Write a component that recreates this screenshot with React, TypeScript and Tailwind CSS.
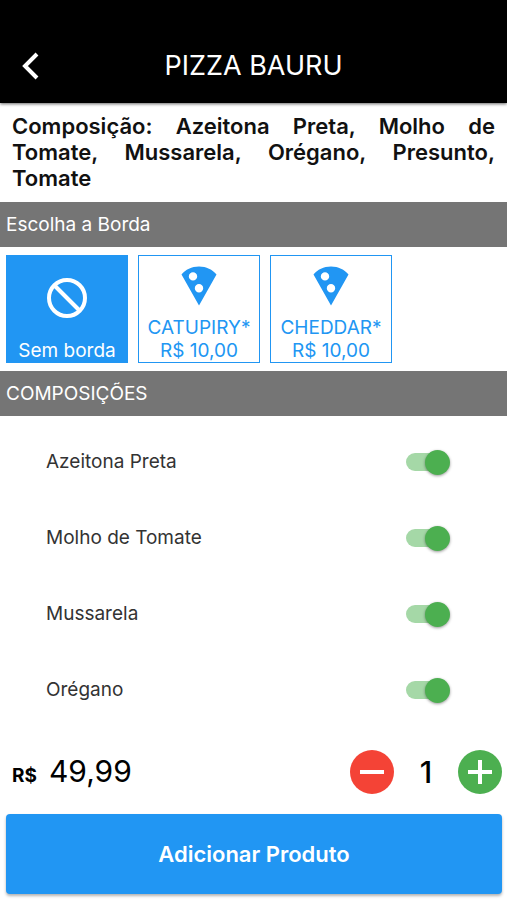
import { useState } from "react";

const ingredients = ["Azeitona Preta", "Molho de Tomate", "Mussarela", "Orégano"];

const crusts = [
  { id: "none", label: "Sem borda", price: "" },
  { id: "catupiry", label: "CATUPIRY*", price: "R$ 10,00" },
  { id: "cheddar", label: "CHEDDAR*", price: "R$ 10,00" },
];

function PizzaIcon() {
  return (
    <svg viewBox="0 0 36 40" className="h-10 w-9" fill="currentColor" aria-hidden="true">
      <path
        fillRule="evenodd"
        d="M18 0.5C10.700 0.500 4.500 3.500 0.500 8.600L18 39.500L35.500 8.600C31.500 3.500 25.300 0.500 18 0.500ZM12 6.200a4.200 4.200 0 1 1 0 8.400a4.200 4.200 0 1 1 0-8.400ZM18 18a4.200 4.200 0 1 1 0 8.400a4.200 4.200 0 1 1 0-8.400Z"
      />
    </svg>
  );
}

function BlockIcon() {
  return (
    <svg viewBox="0 0 40 40" className="size-10" fill="none" stroke="currentColor" strokeWidth="4" aria-hidden="true">
      <circle cx="20" cy="20" r="18" />
      <path d="M7.500 7.500L32.500 32.500" />
    </svg>
  );
}

function SectionTitle({ children }: { children: string }) {
  return (
    <h2 className="flex h-[45px] items-center bg-[#757575] px-1.5 text-[19px] leading-6 text-white">{children}</h2>
  );
}

function IngredientRow({ name }: { name: string }) {
  const [on, setOn] = useState(true);
  return (
    <li>
      <label className="flex h-[76px] cursor-pointer items-center justify-between pr-[57px] pl-[46px] text-[19px] text-[#333333]">
        <span>{name}</span>
        <span className="relative flex h-[25px] w-11 items-center">
          <input
            type="checkbox"
            role="switch"
            checked={on}
            onChange={() => setOn(!on)}
            className="peer absolute inset-0 cursor-pointer opacity-0"
          />
          <span className="pointer-events-none h-[18px] w-10 rounded-full bg-gray-300 peer-checked:bg-[#a5d8a7]" />
          <span className="pointer-events-none absolute left-0 size-[25px] rounded-full bg-gray-100 shadow-[0_1px_3px_rgba(0,0,0,0.4)] peer-checked:left-[19px] peer-checked:bg-[#4caf50]" />
        </span>
      </label>
    </li>
  );
}

export default function App() {
  const [crust, setCrust] = useState("none");
  const [quantity, setQuantity] = useState(1);

  return (
    <div className="flex min-h-screen flex-col bg-white font-['Inter',sans-serif] text-black">
      <header className="grid h-[103px] grid-cols-[62px_1fr_62px] items-center bg-black pt-7 text-white shadow-[0_1px_3px_rgba(0,0,0,0.6)]">
        <button type="button" aria-label="Voltar" className="flex h-11 items-center pl-5">
          <svg viewBox="0 0 20 28" className="h-7 w-5" fill="none" stroke="currentColor" strokeWidth="4" aria-hidden="true">
            <path d="M17 2L5 14L17 26" />
          </svg>
        </button>
        <h1 className="text-center text-[27px] leading-8">PIZZA BAURU</h1>
      </header>

      <main>
        <p className="px-3 pt-[10px] pb-[11px] text-justify text-[22px] leading-[26px] font-semibold text-[#111111]">
          Composição: Azeitona Preta, Molho de Tomate, Mussarela, Orégano, Presunto, Tomate
        </p>

        <SectionTitle>Escolha a Borda</SectionTitle>
        <div className="flex gap-[10px] px-1.5 py-2">
          {crusts.map((item) => (
            <button
              key={item.id}
              type="button"
              aria-pressed={crust === item.id}
              onClick={() => setCrust(item.id)}
              className={`flex h-[108px] w-[122px] flex-col items-center border border-[#2196f3] text-[19px] leading-[23px] ${
                crust === item.id ? "bg-[#2196f3] text-white" : "bg-white text-[#2196f3]"
              }`}
            >
              <span className="flex flex-1 items-center justify-center">
                {item.price ? <PizzaIcon /> : <BlockIcon />}
              </span>
              <span>{item.label}</span>
              {item.price && <span>{item.price}</span>}
            </button>
          ))}
        </div>

        <SectionTitle>COMPOSIÇÕES</SectionTitle>
        <ul className="pt-2">
          {ingredients.map((name) => (
            <IngredientRow key={name} name={name} />
          ))}
        </ul>
      </main>

      <footer className="mt-auto pr-[5px] pb-1.5 pl-1.5">
        <div className="flex items-center justify-between pb-5 pl-1.5">
          <p className="flex items-baseline gap-3">
            <span className="text-[19px] font-bold">R$</span>
            <span className="text-[30px] leading-9">49,99</span>
          </p>
          <div className="flex items-center">
            <button
              type="button"
              aria-label="Diminuir quantidade"
              onClick={() => setQuantity(Math.max(1, quantity - 1))}
              className="flex size-11 items-center justify-center rounded-full bg-[#f44336] text-white"
            >
              <svg viewBox="0 0 24 24" className="size-6" stroke="currentColor" strokeWidth="4" aria-hidden="true">
                <path d="M0 12H24" />
              </svg>
            </button>
            <output className="w-16 text-center text-[30px] leading-9 font-medium">{quantity}</output>
            <button
              type="button"
              aria-label="Aumentar quantidade"
              onClick={() => setQuantity(quantity + 1)}
              className="flex size-11 items-center justify-center rounded-full bg-[#4caf50] text-white"
            >
              <svg viewBox="0 0 24 24" className="size-6" stroke="currentColor" strokeWidth="4" aria-hidden="true">
                <path d="M0 12H24M12 0V24" />
              </svg>
            </button>
          </div>
        </div>
        <button
          type="button"
          className="h-20 w-full rounded bg-[#2196f3] text-[22px] font-semibold text-white shadow-[0_2px_3px_rgba(0,0,0,0.3)]"
        >
          Adicionar Produto
        </button>
      </footer>
    </div>
  );
}
